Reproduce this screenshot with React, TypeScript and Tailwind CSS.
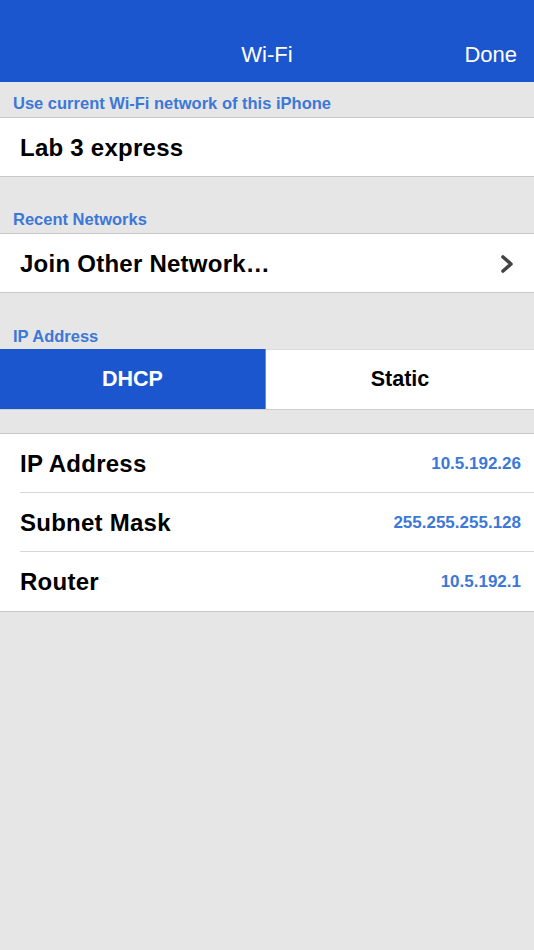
const font = { fontFamily: '"Liberation Sans", Arial, sans-serif' };

const SectionLabel = ({ text, h, pb }: { text: string; h: string; pb: string }) => (
  <div className={`flex items-end ${h} ${pb} pl-[13px] bg-[#e6e6e6]`}>
    <span className="text-[16.5px] leading-[20px] font-bold text-[#3b78d8]">{text}</span>
  </div>
);

const InfoRow = ({ label, value, last }: { label: string; value: string; last?: boolean }) => (
  <div className="pl-[20px] bg-white">
    <div
      className={`flex items-center justify-between h-[59px] pt-[2px] pr-[13px] border-b ${
        last ? "border-transparent" : "border-[#d6d6d6]"
      }`}
    >
      <span className="text-[24px] font-bold tracking-[0.25px] text-black">{label}</span>
      <span className="text-[17px] font-bold text-[#3b78d8]">{value}</span>
    </div>
  </div>
);

export default function App() {
  return (
    <div className="w-[534px] h-[950px] bg-[#e6e6e6] flex flex-col overflow-hidden" style={font}>
      {/* nav bar */}
      <div className="h-[82px] bg-[#1c56ce] pt-[26px] relative">
        <div className="h-full flex items-center justify-center">
          <span className="text-[22px] text-white">Wi-Fi</span>
        </div>
        <span className="absolute right-[17px] top-[40px] text-[22px] leading-[30px] text-white">Done</span>
      </div>

      <div className="border-b border-[#c8c8c8]">
        <SectionLabel text="Use current Wi-Fi network of this iPhone" h="h-[35px]" pb="pb-[4px]" />
      </div>
      <div className="h-[59px] bg-white border-b border-[#c8c8c8] flex items-center pt-[2px] pl-[20px]">
        <span className="text-[24px] font-bold tracking-[0.25px] text-black">Lab 3 express</span>
      </div>

      <div className="border-b border-[#c8c8c8]">
        <SectionLabel text="Recent Networks" h="h-[56px]" pb="pb-[4px]" />
      </div>
      <div className="h-[59px] bg-white border-b border-[#c8c8c8] flex items-center justify-between pt-[2px] pl-[20px] pr-[20px]">
        <span className="text-[24px] font-bold tracking-[0.25px] text-black">Join Other Network…</span>
        <svg width="14" height="20" viewBox="0 0 14 20">
          <polyline
            points="3,3 11,10 3,17"
            fill="none"
            stroke="#444"
            strokeWidth="3.6"
            strokeLinecap="round"
            strokeLinejoin="round"
          />
        </svg>
      </div>

      <SectionLabel text="IP Address" h="h-[56px]" pb="pb-[3px]" />

      {/* segmented control */}
      <div className="flex h-[61px] border-b border-[#cfcfcf]">
        <div className="w-[266px] bg-[#1c56ce] border-r border-[#7d8aa3] flex items-center justify-center">
          <span className="text-[21.5px] font-bold text-white">DHCP</span>
        </div>
        <div className="flex-1 bg-white border-t border-[#dcdcdc] flex items-center justify-center">
          <span className="text-[21.5px] font-bold text-black">Static</span>
        </div>
      </div>

      <div className="h-[24px] border-b border-[#c8c8c8]" />

      <div className="border-b border-[#c8c8c8]">
        <InfoRow label="IP Address" value="10.5.192.26" />
        <InfoRow label="Subnet Mask" value="255.255.255.128" />
        <InfoRow label="Router" value="10.5.192.1" last />
      </div>
    </div>
  );
}
